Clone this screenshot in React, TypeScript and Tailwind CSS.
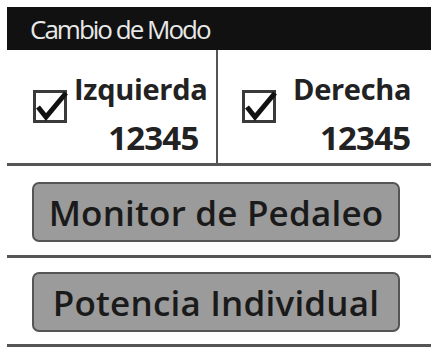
import React from 'react';

const Check: React.FC = () => (
  <svg width="36" height="34" viewBox="0 0 36 34" className="shrink-0">
    <rect x="1.5" y="1.5" width="31" height="30" fill="white" stroke="#3a3a3a" strokeWidth="3" />
    <path d="M5 17 L13 27 L33 3" fill="none" stroke="#111" strokeWidth="5" strokeLinejoin="miter" />
  </svg>
);

const App: React.FC = () => {
  return (
    <div className="w-[431px] h-[351px] bg-white overflow-hidden" style={{ fontFamily: '"Open Sans", "Liberation Sans", sans-serif' }}>
      {/* Header */}
      <div className="ml-[7px] mt-[7px] h-[43px] bg-[#111] flex items-center pl-[23px]">
        <span className="text-[26px] text-[#e8e8e8] font-medium tracking-[-2px] leading-none">Cambio de Modo</span>
      </div>

      {/* Sides */}
      <div className="ml-[7px] flex h-[116px] border-b-[3px] border-[#555]">
        <div className="w-[211px] border-r-2 border-[#555] flex pl-[26px]">
          <div className="mt-[40px]"><Check /></div>
          <div className="flex flex-col items-end ml-[5px] mt-[22px] text-[#222] font-bold">
            <span className="text-[29px] leading-[34px] tracking-[-0.3px]">Izquierda</span>
            <span className="text-[33px] leading-[34px] mr-[9px] mt-[15px] tracking-[-0.8px]">12345</span>
          </div>
        </div>
        <div className="flex-1 flex pl-[24px]">
          <div className="mt-[40px]"><Check /></div>
          <div className="flex flex-col items-end ml-[15px] mt-[22px] text-[#222] font-bold">
            <span className="text-[29px] leading-[34px] tracking-[-0.3px]">Derecha</span>
            <span className="text-[33px] leading-[34px] mr-[1px] mt-[15px] tracking-[-0.8px]">12345</span>
          </div>
        </div>
      </div>

      {/* Buttons */}
      <div className="ml-[7px] pt-[16px] pb-[13px] border-b-[3px] border-[#555] pl-[25px]">
        <div className="w-[368px] h-[60px] bg-[#9b9b9b] border-2 border-[#555] rounded-[7px] flex items-center justify-center">
          <span className="text-[35px] text-[#1a1a1a] font-semibold leading-none tracking-[0.2px]">Monitor de Pedaleo</span>
        </div>
      </div>
      <div className="ml-[7px] pt-[14px] pb-[12px] border-b-[3px] border-[#555] pl-[25px]">
        <div className="w-[368px] h-[60px] bg-[#9b9b9b] border-2 border-[#555] rounded-[7px] flex items-center justify-center">
          <span className="text-[35px] text-[#1a1a1a] font-semibold leading-none tracking-[0.2px]">Potencia Individual</span>
        </div>
      </div>
    </div>
  );
};

export default App;
